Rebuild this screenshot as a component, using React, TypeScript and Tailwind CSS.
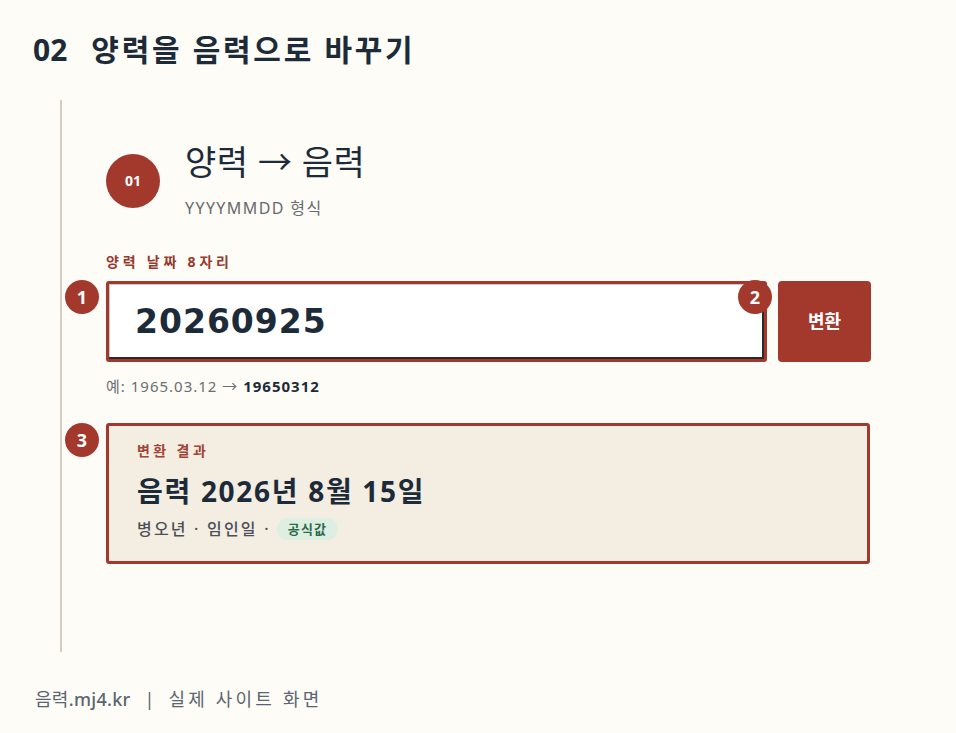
import React from 'react';

const KR = "font-['Noto_Sans','Noto_Sans_CJK_KR',sans-serif]";

const Badge = ({ n, className }: { n: number; className: string }) => (
    <span
        className={`absolute flex h-[34px] w-[34px] items-center justify-center rounded-full bg-[#a3392d] text-[18px] font-bold leading-none text-white ${className}`}
    >
        {n}
    </span>
);

export default function App() {
    return (
        <div className={`min-h-[733px] w-full bg-[#fdfcf6] text-[#1d2b39] ${KR}`}>
            {/* Section title */}
            <h1 className="flex h-[68px] items-end pl-[33px] text-[30px] font-bold leading-[36px] text-[#1d2b39]">
                <span className="mr-[24px]">02</span>
                <span className="tracking-[2.7px]">양력을 음력으로 바꾸기</span>
            </h1>

            {/* Screen capture block */}
            <div className="ml-[60px] mt-[32px] h-[552px] border-l-2 border-[#d3cec1] pl-[44px] pt-[42px]">
                {/* Step header */}
                <div className="flex items-center gap-[25px]">
                    <div className="flex h-[54px] w-[54px] items-center justify-center rounded-full bg-[#a3392d] text-[14px] font-bold text-white">
                        01
                    </div>
                    <div>
                        <div className="text-[34px] font-normal leading-[40px] tracking-[0.5px] text-[#1d2b39]">양력 → 음력</div>
                        <div className="mt-[15px] text-[16px] leading-[22px] tracking-[1.4px] text-[#666a6e]">YYYYMMDD 형식</div>
                    </div>
                </div>

                <div className="mt-[34px] text-[14px] font-bold leading-[18px] tracking-[3.8px] text-[#97392e]">
                    양력 날짜 8자리
                </div>

                {/* Input row */}
                <div className="mt-[10px] flex gap-[11px]">
                    <div className="relative h-[81px] w-[661px] rounded-[3px] border-[3px] border-[#a3392d] bg-white shadow-[inset_-2px_-2px_0_#2a2a2a,inset_1px_1px_0_#c8c8c8]">
                        <div className="flex h-full items-center pl-[26px] font-['DejaVu_Sans',sans-serif] text-[33px] font-bold tracking-[1px] text-[#1d2b39]">
                            20260925
                        </div>
                        <Badge n={1} className="left-[-44px] top-[-4px]" />
                        <Badge n={2} className="right-[-8px] top-[-4px]" />
                    </div>
                    <button className="flex h-[81px] w-[93px] items-center justify-center rounded-[4px] bg-[#a3392d] text-[18px] font-bold text-white">
                        변환
                    </button>
                </div>

                <div className="mt-[14px] text-[15px] leading-[20px] tracking-[1px] text-[#6b6e72]">
                    예: 1965.03.12 → <span className="font-bold text-[#1d2b39]">19650312</span>
                </div>

                {/* Result */}
                <div className="relative mt-[27px] h-[141px] w-[764px] rounded-[3px] border-[3px] border-[#a3392d] bg-[#f3ede2] pl-[28px] pt-[16px]">
                    <Badge n={3} className="left-[-44px] top-[-3px]" />
                    <div className="text-[14px] font-bold leading-[18px] tracking-[3.4px] text-[#a04436]">변환 결과</div>
                    <div className="mt-[14px] text-[28px] font-bold leading-[34px] tracking-[1.7px] text-[#1d2b39]">음력 2026년 8월 15일</div>
                    <div className="mt-[10px] flex items-center text-[16px] font-medium leading-[22px] tracking-[2.2px] text-[#4a4f55]">
                        <span>병오년 · 임인일 ·</span>
                        <span className="ml-[6px] rounded-full bg-[#dcefe2] px-[11px] text-[13px] font-bold leading-[22px] tracking-[1.2px] text-[#2d6a48]">
                            공식값
                        </span>
                    </div>
                </div>
            </div>

            {/* Caption */}
            <div className="mt-[35px] pl-[35px] text-[18px] leading-[24px] text-[#5b6470]">
                <span className="tracking-[0.3px]">
                    음력<span className="font-medium">.mj4.kr</span>
                </span>
                <span className="mx-[14px]">|</span>
                <span className="tracking-[3.2px]">실제 사이트 화면</span>
            </div>
        </div>
    );
}
